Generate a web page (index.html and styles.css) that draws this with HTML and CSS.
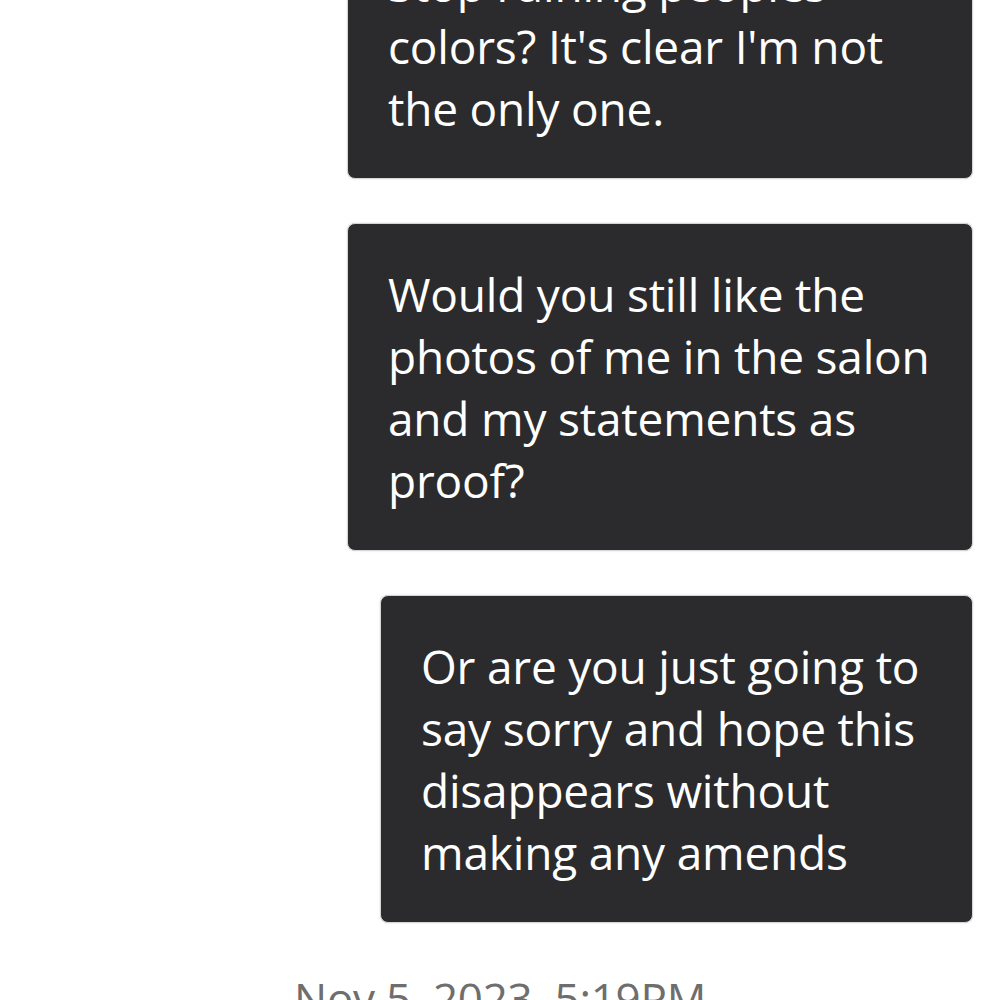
FILE: index.html
```html
<!DOCTYPE html>
<html lang="en">
<head>
    <meta charset="UTF-8">
    <meta name="viewport" content="width=device-width, initial-scale=1.0">
    <title>Messages</title>
    <link rel="stylesheet" href="styles.css">
</head>
<body>
    <div class="thread">
        <div class="bubble">Stop ruining peoples' colors? It's clear I'm not the only one.</div>
        <div class="bubble">Would you still like the photos of me in the salon and my statements as proof?</div>
        <div class="bubble bubble-narrow">Or are you just going to say sorry and hope this disappears without making any amends</div>
        <p class="timestamp">Nov 5, 2023, 5:19PM</p>
    </div>
</body>
</html>
```

FILE: styles.css
```css
body {
    margin: 0;
    background-color: #ffffff;
    font-family: "Open Sans", "Noto Sans", sans-serif;
    overflow: hidden;
}
.thread {
    display: flex;
    flex-direction: column;
    align-items: flex-end;
    gap: 44px;
    margin-top: -87px;
    padding-right: 27px;
}
.bubble {
    box-sizing: border-box;
    width: 626px;
    padding: 39px 40px;
    background-color: #2b2b2d;
    border: 1px solid #d6d6d6;
    border-radius: 8px;
    box-shadow: 0 0 2px rgba(0,0,0,0.15);
    color: #ffffff;
    font-size: 46px;
    letter-spacing: -0.2px;
    line-height: 62px;
}
.bubble-narrow {
    width: 593px;
}
.timestamp {
    align-self: stretch;
    margin: 0;
    padding-left: 27px;
    text-align: center;
    color: #6e6e6e;
    font-size: 44px;
    letter-spacing: -0.3px;
    line-height: 62px;
}
```
